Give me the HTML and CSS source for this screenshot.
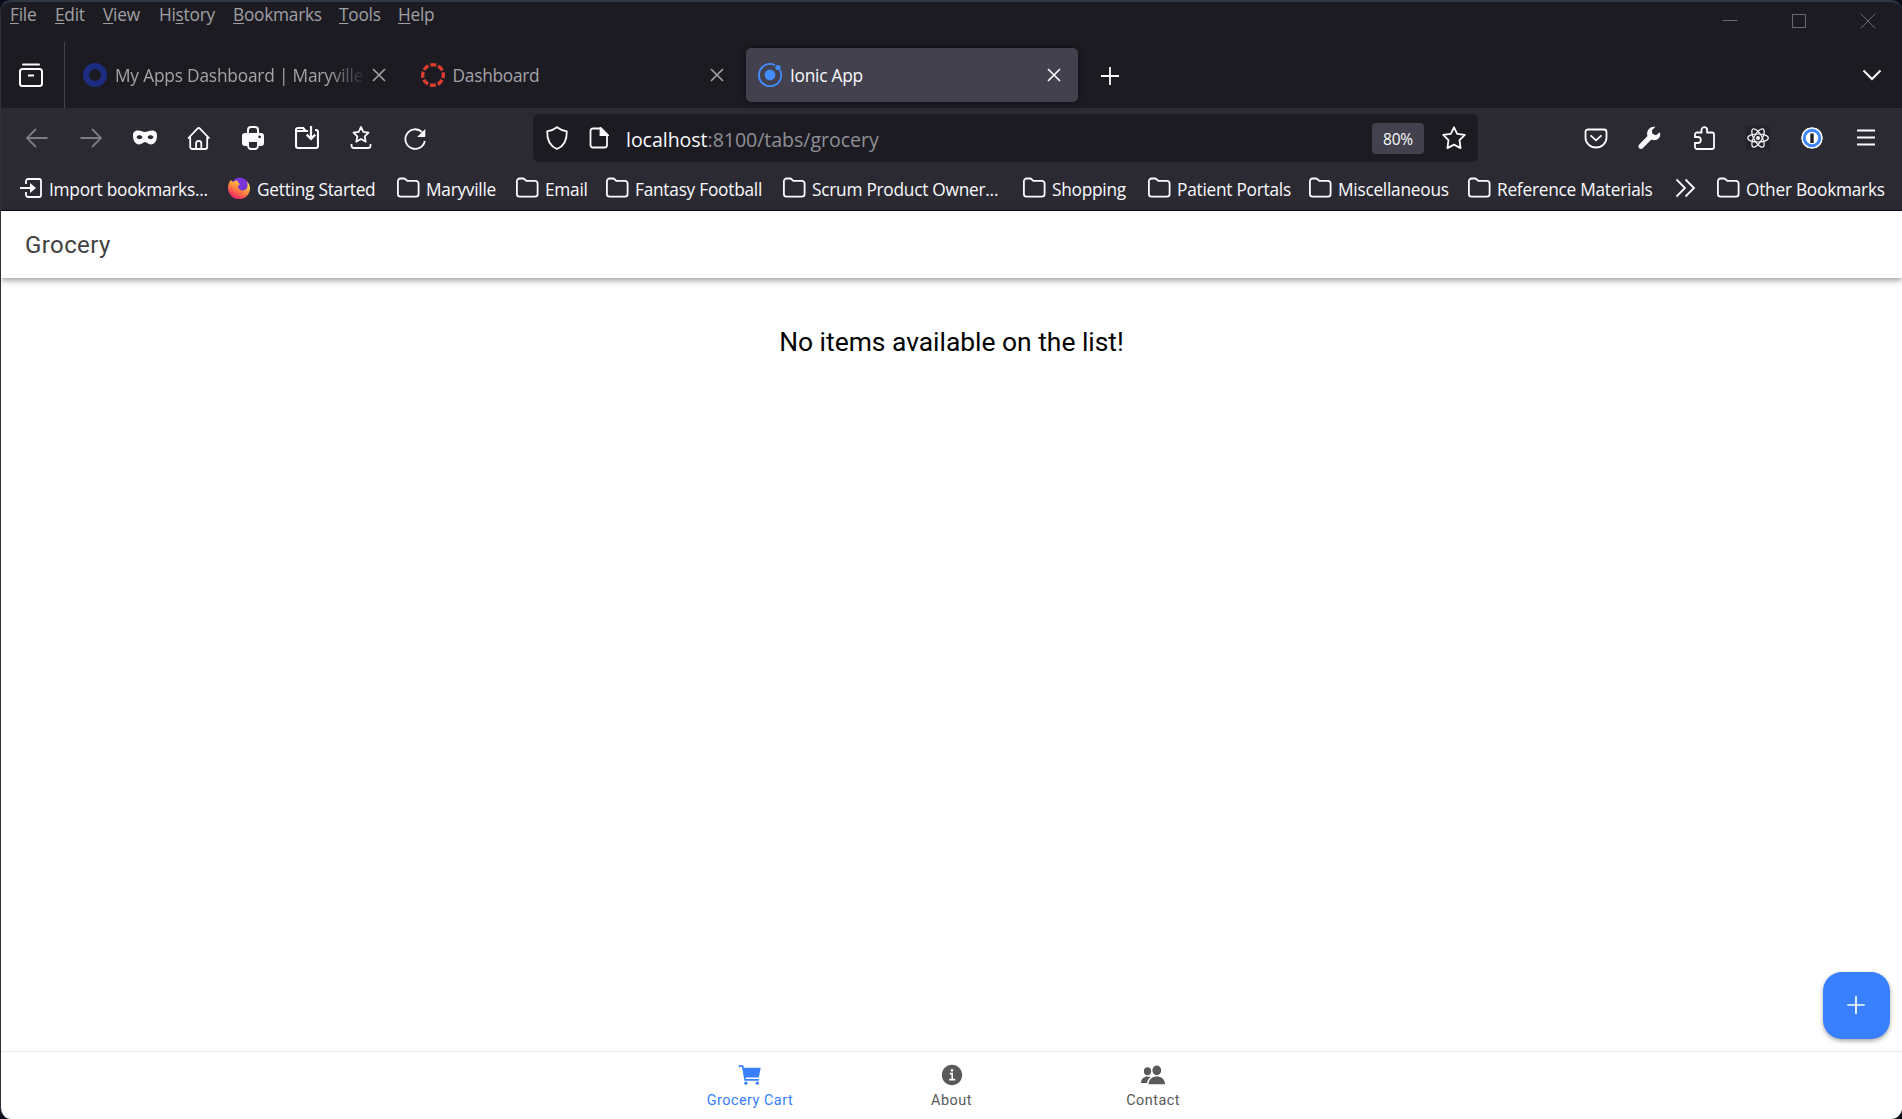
FILE: index.html
```
<!DOCTYPE html>
<html lang="en">
<head>
<meta charset="utf-8">
<title>Ionic App</title>
<link rel="stylesheet" href="styles.css">
</head>
<body>
<svg class="defs" width="0" height="0" aria-hidden="true">
  <symbol id="folder" viewBox="0 0 24 22"><path d="M1.9 4.200a2.700 2.700 0 0 1 2.700-2.700h3.300c.7 0 1.300.3 1.800.8l1.600 1.600h8.600a2.700 2.700 0 0 1 2.700 2.700v10.400a2.700 2.700 0 0 1-2.700 2.700H4.600a2.700 2.700 0 0 1-2.700-2.700z" fill="none" stroke="currentColor" stroke-width="1.800"/></symbol>
  <symbol id="close" viewBox="0 0 14 14"><path d="M1 1l12 12M13 1L1 13" fill="none" stroke="currentColor" stroke-width="1.600"/></symbol>
</svg>
<div class="window">
  <div class="titlebar">
    <nav class="menu">
      <span class="m-file"><u>F</u>ile</span><span class="m-edit"><u>E</u>dit</span><span class="m-view"><u>V</u>iew</span><span class="m-history">Hi<u>s</u>tory</span><span class="m-bookmarks"><u>B</u>ookmarks</span><span class="m-tools"><u>T</u>ools</span><span><u>H</u>elp</span>
    </nav>
    <div class="controls">
      <svg width="16" height="16"><path d="M.5 7.500h15" stroke="currentColor"/></svg>
      <svg width="16" height="16"><rect x="1.500" y="1.500" width="13" height="13" fill="none" stroke="currentColor"/></svg>
      <svg width="16" height="16"><path d="M.5.5l15 15M15.500.5l-15 15" stroke="currentColor"/></svg>
    </div>
  </div>
  <div class="tabstrip">
    <div class="view">
      <svg width="24" height="24" fill="none" stroke="#fbfbfe" stroke-width="2"><path d="M4 1.500h16" stroke-linecap="round"/><rect x="1" y="6" width="22" height="17" rx="2.500"/><path d="M9 12.500h6"/></svg>
    </div>
    <div class="tab">
      <svg class="fav" viewBox="0 0 24 24"><circle cx="12" cy="12" r="9" fill="none" stroke="#1c2c80" stroke-width="6"/></svg>
      <span class="label fade">My Apps Dashboard | Maryville</span>
      <svg class="x"><use href="#close"/></svg>
    </div>
    <div class="tab">
      <svg class="fav" viewBox="0 0 24 24"><circle cx="12" cy="12" r="10.300" fill="none" stroke="#dc3c2e" stroke-width="3.400" stroke-dasharray="6.090 2" stroke-dashoffset="3.045"/></svg>
      <span class="label">Dashboard</span>
      <svg class="x"><use href="#close"/></svg>
    </div>
    <div class="tab active">
      <svg class="fav" viewBox="0 0 24 24"><circle cx="12" cy="12" r="5.400" fill="#428cff"/><circle cx="20" cy="4.600" r="2.600" fill="#428cff"/><path d="M17 2.200A11.100 11.100 0 1 0 22 7.200" fill="none" stroke="#428cff" stroke-width="1.800"/></svg>
      <span class="label">Ionic App</span>
      <svg class="x"><use href="#close"/></svg>
    </div>
    <svg class="plus" width="18" height="18"><path d="M9 0v18M0 9h18" stroke="currentColor" stroke-width="1.800"/></svg>
    <svg class="chev" width="20" height="12"><path d="M1.500 1.500L10 10l8.500-8.500" fill="none" stroke="currentColor" stroke-width="2"/></svg>
  </div>
  <div class="navbar">
    <div class="nav-left">
      <svg class="off" viewBox="0 0 24 24"><path d="M22.500 12H2M11 3l-9 9 9 9"/></svg>
      <svg class="off" viewBox="0 0 24 24"><path d="M1.500 12H22M13 3l9 9-9 9"/></svg>
      <svg viewBox="0 0 24 24"><path d="M0 9.500C0 6 2 4.600 5 4.600c3 0 4.500 1.400 7 1.400s4-1.400 7-1.400c3 0 5 1.400 5 4.900 0 5.500-2.500 9-6 9-3 0-4-2.500-6-2.500s-3 2.500-6 2.500c-3.500 0-6-3.500-6-9zM3.500 11.200c1.200 2.600 4.800 2.600 6 0-1.200-2.600-4.800-2.600-6 0zm11 0c1.200 2.600 4.800 2.600 6 0-1.200-2.600-4.800-2.600-6 0z" fill="currentColor" stroke="none" fill-rule="evenodd"/></svg>
      <svg viewBox="0 0 24 24"><path d="M1 12.500L10.700 2.400a1.400 1.400 0 0 1 2 0l9.700 10.100M3.200 11v10a2 2 0 0 0 2 2h13a2 2 0 0 0 2-2V11M9.100 23v-5.500a2.600 2.600 0 0 1 5.200 0V23"/></svg>
      <svg viewBox="0 0 24 24"><path d="M6 4a4 4 0 0 1 4-4h4a4 4 0 0 1 4 4v3h2a3 3 0 0 1 3 3v7a3 3 0 0 1-3 3h-2.300a4 4 0 0 1-3.700 4h-4a4 4 0 0 1-3.700-4H4a3 3 0 0 1-3-3v-7a3 3 0 0 1 3-3h2zm2 0v3h8V4a2 2 0 0 0-2-2h-4a2 2 0 0 0-2 2zm0 12v4a2 2 0 0 0 2 2h4a2 2 0 0 0 2-2v-4zM18.600 9.500a1.400 1.400 0 1 0 .1 0z" fill="currentColor" fill-rule="evenodd" stroke="none"/></svg>
      <svg viewBox="0 0 24 24"><path d="M13 5h-2.500L8.300 2H3a2 2 0 0 0-2 2v16a2 2 0 0 0 2 2h18a2 2 0 0 0 2-2V6a2 2 0 0 0-2-2h-1M1 5h10M16 0v12.500M11.700 8.600l4.300 4.300 4.300-4.300" stroke-width="2.200"/></svg>
      <svg viewBox="0 0 24 24"><path d="M12 1l2.300 4.900 5.200.7-3.800 3.700 1 5.300-4.700-2.600-4.700 2.600 1-5.300-3.800-3.700 5.200-.7zM2.500 18v1.500a2.500 2.500 0 0 0 2.500 2.500h14a2.500 2.500 0 0 0 2.500-2.500V18" stroke-linejoin="round"/></svg>
      <svg viewBox="0 0 24 24"><path d="M19 6A9.800 9.800 0 1 0 21.800 15"/><path d="M22.300 3v7a1 1 0 0 1-1 1h-7.200z" fill="currentColor" stroke="none"/></svg>
    </div>
    <div class="urlbar">
      <svg class="shield" viewBox="0 0 24 24"><path d="M12 1.200c2.500 2 5.500 3.200 9.800 4.200.2 7.600-2.300 14.400-9.800 17.600C4.500 19.800 2 13 2.200 5.400 6.500 4.400 9.500 3.200 12 1.200z"/></svg>
      <svg class="page" viewBox="0 0 20 22"><path d="M4 1.500h8l6 6V18a2.500 2.500 0 0 1-2.500 2.500H4A2.500 2.500 0 0 1 1.500 18V4A2.500 2.500 0 0 1 4 1.500z"/><path d="M11.500 1v7.200H19z" fill="currentColor"/></svg>
      <span class="url"><b>localhost</b>:8100/tabs/grocery</span>
      <span class="zoom">80%</span>
      <svg class="star" viewBox="0 0 24 24"><path d="M12 1.300l3.200 6.500 7.600 1-5.300 5.300 1.100 8-6.600-3.500-6.600 3.500 1.100-8-5.300-5.300 7.600-1z" stroke-linejoin="round"/></svg>
    </div>
    <div class="nav-right">
      <svg viewBox="0 0 24 24"><path d="M4 3.500h16a2.500 2.500 0 0 1 2.500 2.500v5.500a10.500 10 0 0 1-21 0V6A2.500 2.500 0 0 1 4 3.500zM6.500 9.300l5.500 5 5.500-5"/></svg>
      <svg viewBox="0 0 24 24"><path d="M21.800 6.200l-3.700 3-3.500-1.200-.8-3.600 3.600-3.600A7 7 0 0 0 9.500 10L1 18.800c-1.800 2.700 1.300 5.500 3.700 3.500l8.700-8.700c5.500 2.200 10.300-2.300 8.400-7.400z" fill="currentColor" stroke="none"/></svg>
      <svg viewBox="0 0 24 24"><path d="M3 11V8.500a2 2 0 0 1 2-2h4.500V4a2.800 2.800 0 0 1 5.600 0v2.500h4.900a2 2 0 0 1 2 2V21a2 2 0 0 1-2 2H5a2 2 0 0 1-2-2v-4h2.800a2.800 2.800 0 0 0 0-6z"/></svg>
      <svg viewBox="0 0 24 24"><rect width="24" height="24" fill="#24232b" stroke="none"/><g stroke-width="1.200"><ellipse cx="12" cy="12" rx="10.300" ry="4"/><ellipse cx="12" cy="12" rx="10.300" ry="4" transform="rotate(60 12 12)"/><ellipse cx="12" cy="12" rx="10.300" ry="4" transform="rotate(120 12 12)"/></g><circle cx="12" cy="12" r="2" fill="currentColor" stroke="none"/></svg>
      <svg viewBox="0 0 24 24"><circle cx="12" cy="12" r="11.300" fill="#fff" stroke="#1d1c20" stroke-width="1"/><circle cx="12" cy="12" r="7.700" fill="#fff" stroke="#3e84f7" stroke-width="3"/><rect x="10.300" y="7.500" width="3.400" height="9.500" fill="#222" stroke="none"/></svg>
      <svg viewBox="0 0 24 24"><path d="M3 4.500h18M3 11.500h18M3 18.500h18"/></svg>
    </div>
  </div>
  <div class="bookmarks">
    <div class="bm b1"><svg viewBox="0 0 24 22"><path d="M7 7V4a2 2 0 0 1 2-2h11a2 2 0 0 1 2 2v14a2 2 0 0 1-2 2H9a2 2 0 0 1-2-2v-3M1 11h12" fill="none" stroke="currentColor" stroke-width="1.800"/><path d="M11 6l6 5-6 5z" fill="currentColor"/></svg><span>Import bookmarks...</span></div>
    <div class="bm b2"><svg viewBox="0 0 24 22"><defs><linearGradient id="fx" x1=".8" y1=".1" x2=".25" y2="1"><stop offset="0" stop-color="#ffe24a"/><stop offset=".45" stop-color="#ff8a3c"/><stop offset="1" stop-color="#f5156c"/></linearGradient></defs><circle cx="13" cy="9.500" r="9" fill="#7a35d8"/><path d="M4 3l2 2 3-1.500c2 0 2 1 2 2l2 1.500-2 2c0 3 2 4.500 5 4.500 4 0 5.500-4 4-9 2 2 3 4.500 3 7A11 11 0 0 1 1 11c0-3.500 1-6 3-8z" fill="url(#fx)"/></svg><span>Getting Started</span></div>
    <div class="bm b3"><svg><use href="#folder"/></svg><span>Maryville</span></div>
    <div class="bm b4"><svg><use href="#folder"/></svg><span>Email</span></div>
    <div class="bm b5"><svg><use href="#folder"/></svg><span>Fantasy Football</span></div>
    <div class="bm b6"><svg><use href="#folder"/></svg><span>Scrum Product Owner...</span></div>
    <div class="bm b7"><svg><use href="#folder"/></svg><span>Shopping</span></div>
    <div class="bm b8"><svg><use href="#folder"/></svg><span>Patient Portals</span></div>
    <div class="bm b9"><svg><use href="#folder"/></svg><span>Miscellaneous</span></div>
    <div class="bm b10"><svg><use href="#folder"/></svg><span>Reference Materials</span></div>
    <div class="bm b11"><svg viewBox="0 0 24 22"><path d="M2.500 2.500L11 11l-8.500 8.500M11.500 2.500L20 11l-8.500 8.500" fill="none" stroke="currentColor" stroke-width="1.800"/></svg></div>
    <div class="bm b12"><svg><use href="#folder"/></svg><span>Other Bookmarks</span></div>
  </div>
  <div class="app">
    <header><h1>Grocery</h1></header>
    <main>
      <h2>No items available on the list!</h2>
      <button class="fab" aria-label="Add"><svg width="18" height="18"><path d="M9 .8v16.400M.8 9h16.400" stroke="#fff" stroke-width="1.700" stroke-linecap="round"/></svg></button>
    </main>
    <footer>
      <a class="on"><svg viewBox="0 0 512 512"><circle cx="176" cy="416" r="32"/><circle cx="400" cy="416" r="32"/><path d="M167.780 304h261.340l38.400-192H133.890l-8.470-48H32v32h66.580l48 272H432v-32H173.420l-5.640-32z"/></svg><span>Grocery Cart</span></a>
      <a><svg viewBox="0 0 512 512"><path d="M256 56C145.720 56 56 145.720 56 256s89.720 200 200 200 200-89.720 200-200S366.280 56 256 56zm0 82a26 26 0 1 1-26 26 26 26 0 0 1 26-26zm64 226H200v-32h44v-88h-32v-32h64v120h44z"/></svg><span>About</span></a>
      <a><svg viewBox="0 0 26 26"><ellipse cx="7.500" cy="9.300" rx="3.600" ry="4"/><ellipse cx="16.800" cy="8.400" rx="4.400" ry="4.800"/><path d="M8.700 22.200c0-5 3.800-7.600 8.100-7.600s8.200 2.600 8.200 7.600zM10.800 15.200c-2.300 1.300-3.500 3.200-3.700 5.700H1c0-4 3-6.300 6.500-6.300 1.200 0 2.300.2 3.300.6z"/></svg><span>Contact</span></a>
    </footer>
  </div>
</div>
</body>
</html>
```
FILE: styles.css
```
* { box-sizing: border-box; }
body { margin: 0; background: #0a0d1a; overflow: hidden; }
svg { display: block; flex: none; }
.defs { position: absolute; }
.window {
  width: 1902px; height: 1119px;
  display: flex; flex-direction: column;
  border-top: 2px solid #303742; border-left: 1px solid #2c303b;
  border-radius: 11px; overflow: hidden;
  background: #1c1b22; color: #fbfbfe;
  font-family: "Open Sans", "Noto Sans", sans-serif;
  font-size: 17.300px; letter-spacing: -.25px;
}
.titlebar { height: 40px; display: flex; justify-content: space-between; color: #a0a0a4; }
.menu { display: flex; padding-left: 9px; line-height: 26px; white-space: nowrap; }
.menu u { text-decoration-thickness: 1px; text-underline-offset: 2px; }
.m-file { width: 45px; }
.m-edit { width: 48px; }
.m-view { width: 56px; }
.m-history { width: 74px; }
.m-bookmarks { width: 106px; }
.m-tools { width: 59px; }
.controls { display: flex; gap: 53px; padding: 11px 26px 0 0; color: #68686e; }

.tabstrip { height: 66px; display: flex; align-items: center; }
.view { width: 64px; height: 66px; padding: 21px 0 0 18px; border-right: 1px solid #44434b; }
.tab { width: 332px; height: 54px; margin-left: 6px; padding: 0 17px 0 12px; display: flex; align-items: center; border-radius: 5px; color: #a4a4a8; }
.tab + .tab { margin-left: 5.500px; }
.tab.active { background: #42414d; color: #fbfbfe; box-shadow: 0 0 4px #0c0c10; }
.fav { width: 24px; height: 24px; }
.label { flex: 1; margin-left: 8px; padding-top: 2px; white-space: nowrap; overflow: hidden; line-height: 30px; }
.fade { margin-right: 10px; letter-spacing: -.18px; -webkit-mask-image: linear-gradient(90deg, #000 86%, transparent 102%); mask-image: linear-gradient(90deg, #000 86%, transparent 102%); }
.x { width: 14px; height: 14px; }
.plus { margin: 1px 0 0 23px; }
.chev { margin: 0 20px 0 auto; }

.navbar { height: 60px; display: flex; align-items: center; background: #2b2a33; }
.navbar svg { width: 24px; height: 24px; fill: none; stroke: currentColor; stroke-width: 1.800; }
.nav-left { width: 532px; padding-left: 24px; display: flex; gap: 30px; }
.nav-left .off { color: #7d7c84; }
.urlbar { width: 945px; height: 48px; padding: 0 12px; display: flex; align-items: center; background: #1c1b22; border-radius: 6px; }
.navbar .page { width: 20px; height: 22px; margin-left: 20px; }
.url { margin-left: 17px; padding-top: 2px; font-size: 19.600px; letter-spacing: -.06px; color: #8f8f96; flex: 1; }
.url b { font-weight: 400; color: #fbfbfe; }
.zoom { width: 52px; height: 31px; margin-right: 18px; border-radius: 4px; background: #42414d; font-size: 15.500px; line-height: 32px; text-align: center; }
.nav-right { margin-left: auto; padding-right: 24px; display: flex; gap: 30px; }

.bookmarks { height: 43px; display: flex; align-items: center; padding: 0 0 2px 18px; background: #2b2a33; border-bottom: 1px solid #0c0c0d; }
.bm { display: flex; align-items: center; gap: 6px; white-space: nowrap; }
.bm svg { width: 24px; height: 22px; }
.bm span { padding-top: 2px; }
.b1 { width: 208px; }
.b2 { width: 169px; }
.b3 { width: 119px; }
.b4 { width: 90px; }
.b5 { width: 177px; }
.b6 { width: 240px; }
.b7 { width: 125px; }
.b8 { width: 161px; }
.b9 { width: 159px; }
.b10 { width: 207px; }
.b11 { width: 42px; }

.app { flex: 1; display: flex; flex-direction: column; background: #fff; font-family: Roboto, sans-serif; letter-spacing: 0; }
header { height: 67px; padding-left: 24px; display: flex; align-items: center; box-shadow: 0 2px 4px -1px rgba(0,0,0,.2), 0 4px 5px rgba(0,0,0,.14), 0 1px 10px rgba(0,0,0,.12); }
h1 { margin: 0; font-size: 24px; font-weight: 400; letter-spacing: .4px; color: #424242; }
main { flex: 1; display: flex; flex-direction: column; align-items: center; padding: 46px 12px 12px; }
h2 { margin: 0; font-size: 26.400px; font-weight: 400; line-height: 36px; color: #000; }
.fab { margin: auto 0 0 auto; width: 67px; height: 67px; padding: 0 1px 1px 0; border: 0; border-radius: 19px; background: #3880ff; display: grid; place-items: center; box-shadow: 0 2px 4px rgba(0,0,0,.35); }
footer { height: 68px; display: flex; justify-content: center; border-top: 1px solid #e7e7e7; }
footer a { width: 201.600px; display: flex; flex-direction: column; align-items: center; padding-top: 10px; color: #595959; font-size: 14.400px; letter-spacing: .5px; line-height: 20px; }
footer .on { color: #3880ff; }
footer svg { width: 26px; height: 26px; fill: currentColor; margin-bottom: 3px; }
```
